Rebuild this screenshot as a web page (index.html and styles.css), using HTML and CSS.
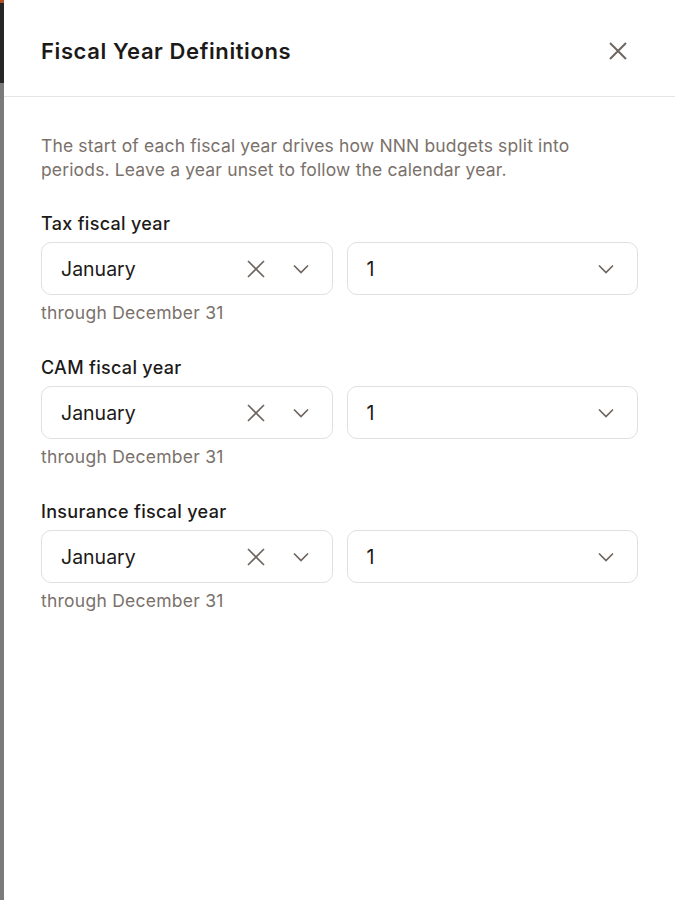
FILE: index.html
```html
<!DOCTYPE html>
<html lang="en">
<head>
  <meta charset="UTF-8">
  <title>Fiscal Year Definitions</title>
  <link rel="stylesheet" href="styles.css">
</head>
<body>

  <!-- Page behind the drawer -->
  <div class="backdrop">
    <div class="backdrop__top"></div>
  </div>

  <!-- Drawer -->
  <aside class="drawer">
    <header class="drawer__header">
      <h2 class="drawer__title">Fiscal Year Definitions</h2>
      <button class="icon-btn" aria-label="Close">
        <svg width="20" height="20" viewBox="0 0 20 20"><path d="M2 2 L18 18 M18 2 L2 18" /></svg>
      </button>
    </header>

    <div class="drawer__body">
      <p class="intro">The start of each fiscal year drives how NNN budgets split into periods. Leave a year unset to follow the calendar year.</p>

      <div class="field">
        <label class="field__label">Tax fiscal year</label>
        <div class="field__row">
          <div class="select">
            <span class="select__value">January</span>
            <svg class="select__clear" width="18" height="18" viewBox="0 0 18 18"><path d="M1 1 L17 17 M17 1 L1 17" /></svg>
            <svg class="select__chevron" width="16" height="10" viewBox="0 0 16 10"><path d="M1 1.5 L8 8.5 L15 1.5" /></svg>
          </div>
          <div class="select">
            <span class="select__value">1</span>
            <svg class="select__chevron" width="16" height="10" viewBox="0 0 16 10"><path d="M1 1.5 L8 8.5 L15 1.5" /></svg>
          </div>
        </div>
        <div class="field__hint">through December 31</div>
      </div>

      <div class="field">
        <label class="field__label">CAM fiscal year</label>
        <div class="field__row">
          <div class="select">
            <span class="select__value">January</span>
            <svg class="select__clear" width="18" height="18" viewBox="0 0 18 18"><path d="M1 1 L17 17 M17 1 L1 17" /></svg>
            <svg class="select__chevron" width="16" height="10" viewBox="0 0 16 10"><path d="M1 1.5 L8 8.5 L15 1.5" /></svg>
          </div>
          <div class="select">
            <span class="select__value">1</span>
            <svg class="select__chevron" width="16" height="10" viewBox="0 0 16 10"><path d="M1 1.5 L8 8.5 L15 1.5" /></svg>
          </div>
        </div>
        <div class="field__hint">through December 31</div>
      </div>

      <div class="field">
        <label class="field__label">Insurance fiscal year</label>
        <div class="field__row">
          <div class="select">
            <span class="select__value">January</span>
            <svg class="select__clear" width="18" height="18" viewBox="0 0 18 18"><path d="M1 1 L17 17 M17 1 L1 17" /></svg>
            <svg class="select__chevron" width="16" height="10" viewBox="0 0 16 10"><path d="M1 1.5 L8 8.5 L15 1.5" /></svg>
          </div>
          <div class="select">
            <span class="select__value">1</span>
            <svg class="select__chevron" width="16" height="10" viewBox="0 0 16 10"><path d="M1 1.5 L8 8.5 L15 1.5" /></svg>
          </div>
        </div>
        <div class="field__hint">through December 31</div>
      </div>
    </div>
  </aside>

</body>
</html>
```

FILE: styles.css
```css
body {
  margin: 0;
  font-family: Inter, "Noto Sans", sans-serif;
  color: #1c1a19;
  background: #fff;
  display: flex;
  min-height: 900px;
}

/* Strip of the page left visible behind the drawer */
.backdrop {
  width: 4px;
  flex-shrink: 0;
  background: #7b7b7b;
}

.backdrop__top {
  height: 80px;
  background: #262626;
  border-top: 3px solid #b3502a;
}

.drawer {
  flex: 1;
  background: #fff;
}

.drawer__header {
  display: flex;
  justify-content: space-between;
  align-items: center;
  height: 90px;
  padding: 6px 37px 0;
  border-bottom: 1px solid #e6e4e2;
}

.drawer__title {
  margin: 0;
  font-size: 22px;
  font-weight: 600;
  letter-spacing: 0.6px;
}

.icon-btn {
  border: 0;
  background: none;
  padding: 0;
  width: 20px;
  height: 20px;
  margin-right: 10px;
}

.icon-btn svg path {
  stroke: #6e6660;
  stroke-width: 2;
  fill: none;
}

.drawer__body {
  padding: 37px 37px;
}

.intro {
  margin: 0 0 30px;
  font-size: 17.5px;
  line-height: 24px;
  letter-spacing: 0.15px;
  color: #7a716b;
}

.field {
  margin-bottom: 31px;
}

.field__label {
  display: block;
  font-size: 18px;
  font-weight: 500;
  line-height: 24px;
  letter-spacing: 0.3px;
  margin-bottom: 6px;
}

.field__row {
  display: grid;
  grid-template-columns: 1fr 1fr;
  gap: 14px;
}

.select {
  box-sizing: border-box;
  display: flex;
  align-items: center;
  height: 53px;
  padding: 0 23px 0 19px;
  border: 1px solid #e2e0de;
  border-radius: 10px;
}

.select__value {
  flex: 1;
  font-size: 19.5px;
}

.select__clear path,
.select__chevron path {
  stroke: #6e6660;
  stroke-width: 1.7;
  fill: none;
}

.select__clear {
  margin-right: 28px;
}

.field__hint {
  margin-top: 6px;
  font-size: 17.5px;
  line-height: 24px;
  letter-spacing: 0.25px;
  color: #7a716b;
}
```
